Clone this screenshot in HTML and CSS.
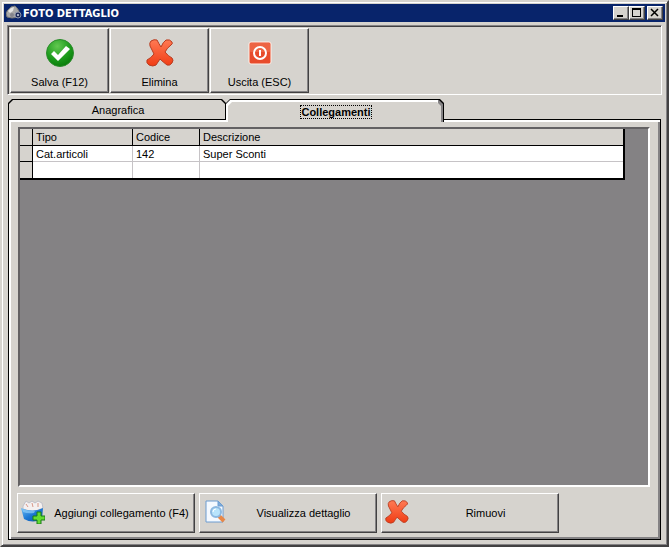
FILE: index.html
```html
<!DOCTYPE html>
<html lang="it">
<head>
    <meta charset="UTF-8">
    <meta name="viewport" content="width=device-width, initial-scale=1.0">
    <title>Foto dettaglio</title>
    <link rel="stylesheet" href="styles.css">
</head>
<body>
    <svg class="defs" aria-hidden="true">
        <defs>
            <linearGradient id="red" x1="0" y1="0" x2="0" y2="1">
                <stop offset="0" stop-color="#ff7a54"/>
                <stop offset="1" stop-color="#f03c14"/>
            </linearGradient>
            <radialGradient id="green" cx="0.4" cy="0.25" r="0.8">
                <stop offset="0" stop-color="#62c850"/>
                <stop offset="0.6" stop-color="#1c9a1c"/>
                <stop offset="1" stop-color="#087808"/>
            </radialGradient>
            <linearGradient id="blue" x1="0" y1="0" x2="1" y2="1">
                <stop offset="0" stop-color="#6cbcf4"/>
                <stop offset="0.5" stop-color="#1c78d4"/>
                <stop offset="1" stop-color="#0c50a4"/>
            </linearGradient>
            <symbol id="cross" viewBox="0 0 28 28">
                <path d="M5 2 Q8 0 11 1 Q13 5 15 8 Q17 3 20 1 Q24 0 26 3 Q27 5 25 6 Q21 9 19 13 Q22 17 26 19 Q28 21 26 24 Q24 27 21 26 Q17 23 14 20 Q12 23 10 26 Q7 28 3 26 Q0 24 1 21 Q5 19 8 15 Q6 11 4 7 Q3 4 5 2 Z" fill="url(#red)" stroke="#b83c20" stroke-width="1"/>
            </symbol>
        </defs>
    </svg>

    <div class="window">
        <header class="title-bar">
            <svg class="app-icon" viewBox="0 0 16 16" aria-hidden="true">
                <path d="M0 8 L2 5 L5 2 L9 1 L11 3 L13 6 L13 12 L6 13 L1 12 Z" fill="#a8a8a8" stroke="#787878"/>
                <path d="M2 6 L5 3 L8 2 L7 6 L4 8 Z" fill="#e4e4e4"/>
                <circle cx="6" cy="10" r="2" fill="#84848c"/>
                <circle cx="12" cy="10" r="3" fill="#202c58" stroke="#8c94ac"/>
                <circle cx="12" cy="10" r="1" fill="#d0d8e8"/>
            </svg>
            <h1>FOTO DETTAGLIO</h1>
            <div class="window-buttons">
                <button type="button" aria-label="Riduci">
                    <svg viewBox="0 0 11 10"><path d="M2 7h6v2H2z"/></svg>
                </button>
                <button type="button" aria-label="Ingrandisci">
                    <svg viewBox="0 0 11 10"><path fill-rule="evenodd" d="M1 0h9v9H1z M2 2v6h7V2z"/></svg>
                </button>
                <button type="button" class="close" aria-label="Chiudi">
                    <svg viewBox="0 0 11 10"><path d="M2 1L9 8M9 1L2 8" stroke="#000" stroke-width="1.500"/></svg>
                </button>
            </div>
        </header>

        <div class="toolbar">
            <button type="button" class="tool">
                <svg viewBox="0 0 28 28" aria-hidden="true">
                    <circle cx="14" cy="14" r="13.500" fill="url(#green)" stroke="#2c8c2c"/>
                    <path d="M5 15 L8 12 L12 16 L20 7 L24 10 L12 22 Z" fill="#fff"/>
                </svg>
                Salva (F12)
            </button>
            <button type="button" class="tool">
                <svg aria-hidden="true"><use href="#cross"/></svg>
                Elimina
            </button>
            <button type="button" class="tool">
                <svg viewBox="0 0 28 28" aria-hidden="true">
                    <rect x="3" y="3" width="22" height="22" rx="2" fill="#e84c2c" stroke="#fff0e8"/>
                    <rect x="4" y="4" width="20" height="9" rx="1" fill="#f07454" opacity="0.6"/>
                    <circle cx="14" cy="14" r="6" fill="none" stroke="#fff" stroke-width="2"/>
                    <path d="M14 11v6" stroke="#fff" stroke-width="2"/>
                </svg>
                Uscita (ESC)
            </button>
        </div>

        <div class="tabs" role="tablist">
            <button type="button" class="tab" role="tab" aria-selected="false"><span>Anagrafica</span></button>
            <button type="button" class="tab active" role="tab" aria-selected="true"><span>Collegamenti</span></button>
        </div>

        <main class="panel">
            <div class="grid">
                <table>
                    <thead>
                        <tr>
                            <th class="marker"></th>
                            <th class="tipo">Tipo</th>
                            <th class="codice">Codice</th>
                            <th>Descrizione</th>
                        </tr>
                    </thead>
                    <tbody>
                        <tr>
                            <th class="marker"></th>
                            <td>Cat.articoli</td>
                            <td>142</td>
                            <td>Super Sconti</td>
                        </tr>
                        <tr>
                            <th class="marker"></th>
                            <td></td>
                            <td></td>
                            <td></td>
                        </tr>
                    </tbody>
                </table>
            </div>

            <div class="actions">
                <button type="button" class="action">
                    <svg viewBox="0 0 24 24" aria-hidden="true">
                        <path d="M2 6 L5 1 L8 3 L11 1 L14 3 L17 1 L21 3 L22 8 L12 12 L2 9 Z" fill="#f4f0f0" stroke="#c0c0c8"/>
                        <path d="M5 4 L7 7 M11 3 L12 7 M17 3 L17 7" stroke="#d89888"/>
                        <path d="M0 8 Q12 13 22 8 L21 19 Q12 24 3 19 Z" fill="url(#blue)"/>
                        <path d="M1 9 Q7 11 14 11 L13 13 Q7 14 2 12 Z" fill="#8cccf8" opacity="0.7"/>
                        <path d="M16 12h4v4h4v4h-4v4h-4v-4h-4v-4h4z" fill="#64dc30" stroke="#187c18"/>
                    </svg>
                    <span>Aggiungi collegamento (F4)</span>
                </button>
                <button type="button" class="action">
                    <svg viewBox="0 0 24 24" aria-hidden="true">
                        <path d="M3 1 H15 L20 6 V22 H3 Z" fill="#f4f9ff" stroke="#6c9cd0"/>
                        <path d="M15 1 V6 H20 Z" fill="#7cacdc" stroke="#6c9cd0"/>
                        <path d="M16 16 L21 21" stroke="#e88848" stroke-width="4"/>
                        <circle cx="13" cy="12" r="5" fill="#b8e4fc" stroke="#8cb8e0" stroke-width="2"/>
                        <path d="M10 12 Q10 9 13 9" fill="none" stroke="#fff"/>
                    </svg>
                    <span>Visualizza dettaglio</span>
                </button>
                <button type="button" class="action">
                    <svg aria-hidden="true"><use href="#cross"/></svg>
                    <span>Rimuovi</span>
                </button>
            </div>
        </main>
    </div>
</body>
</html>
```
FILE: styles.css
```css
* {
    box-sizing: border-box;
    margin: 0;
    padding: 0;
}

body {
    background: #d6d3ce;
    color: #000;
    font-family: "Liberation Sans", Arial, sans-serif;
    font-size: 11px;
    line-height: 14px;
}

button {
    background: #d6d3ce;
    border: none;
    color: inherit;
    font: inherit;
}

.defs {
    position: absolute;
    width: 0;
    height: 0;
}

.window {
    display: flex;
    flex-direction: column;
    min-height: 100vh;
    padding: 2px;
    border: 2px solid;
    border-color: #d6d3ce #424142 #424142 #d6d3ce;
    box-shadow: inset 1px 1px #fff, inset -1px -1px #848284;
}

/* title bar */
.title-bar {
    display: flex;
    align-items: center;
    height: 18px;
    padding: 0 2px;
    background: #08246b;
    color: #fff;
}

.app-icon {
    width: 16px;
    height: 16px;
}

.title-bar h1 {
    flex: 1;
    padding: 1px 0 0 1px;
    font-family: "DejaVu Sans Condensed", "Open Sans", sans-serif;
    font-size: 11px;
    font-weight: bold;
}

.window-buttons {
    display: flex;
}

.window-buttons button {
    width: 16px;
    height: 14px;
    border: 1px solid;
    border-color: #fff #424142 #424142 #fff;
    box-shadow: inset -1px -1px #848284;
}

.window-buttons .close {
    margin-left: 2px;
}

.window-buttons svg {
    display: block;
    width: 11px;
    height: 10px;
    margin: 1px;
}

/* toolbar */
.toolbar {
    display: flex;
    gap: 1px;
    margin: 3px 3px 0;
    padding: 2px 1px 1px 2px;
    border: 1px solid;
    border-color: #848284 #fff #fff #848284;
    box-shadow: inset 1px 1px #424142;
}

.tool {
    display: flex;
    flex-direction: column;
    align-items: center;
    justify-content: space-between;
    width: 99px;
    height: 65px;
    padding: 10px 0 3px;
    border: 1px solid;
    border-color: #fff #424142 #424142 #fff;
    box-shadow: inset -1px -1px #848284;
}

.tool svg {
    width: 28px;
    height: 28px;
}

/* tabs */
.tabs {
    display: flex;
    margin: 4px 4px 0;
}

.tab {
    position: relative;
    z-index: 1;
    width: 218px;
    height: 20px;
    padding: 2px 0 0 2px;
    background: #000;
    clip-path: polygon(0 4px, 4px 0, calc(100% - 4px) 0, 100% 4px, 100% 100%, 0 100%);
}

.tab::before,
.tab.active::after {
    content: "";
    position: absolute;
    inset: 1px 1px 0;
    background: #d6d3ce;
    clip-path: polygon(0 4px, 4px 0, calc(100% - 4px) 0, 100% 4px, 100% 100%, 0 100%);
}

.tab span {
    position: relative;
    z-index: 1;
}

.tab.active {
    height: 23px;
    margin-bottom: -3px;
    font-weight: bold;
}

.tab.active::before {
    inset: 1px 1px 0 0;
    background: linear-gradient(to right, #fff 212px, #848284 212px);
}

.tab.active::after {
    inset: 3px 3px 0 2px;
}

.tab.active span {
    outline: 1px dotted #000;
}

/* panel */
.panel {
    display: flex;
    flex: 1;
    flex-direction: column;
    margin: 0 4px 3px;
    padding: 7px 10px 6px 8px;
    border: 1px solid #000;
    box-shadow: inset 2px 2px #fff, inset -2px -2px #848284;
}

.grid {
    flex: 1;
    margin-left: 1px;
    border: 2px solid;
    border-color: #636163 #fff #fff #636163;
    background: #848284;
}

table {
    width: calc(100% - 23px);
    border-right: 2px solid #000;
    border-bottom: 2px solid #000;
    border-spacing: 0;
    table-layout: fixed;
    background: #fff;
}

th,
td {
    height: 16px;
    padding: 0 3px;
    border-right: 1px solid #c6c3c6;
    border-bottom: 1px solid #c6c3c6;
    line-height: 14px;
    text-align: left;
    font-weight: normal;
}

thead th {
    height: 17px;
}

th {
    background: #d6d3ce;
    border-color: #000;
}

th:last-child,
td:last-child {
    border-right: none;
}

tbody tr:last-child > * {
    border-bottom: none;
}

.marker {
    width: 13px;
}

.tipo {
    width: 100px;
}

.codice {
    width: 67px;
}

/* bottom buttons */
.actions {
    display: flex;
    gap: 4px;
    margin-top: 6px;
}

.action {
    display: flex;
    align-items: center;
    gap: 4px;
    width: 178px;
    height: 40px;
    padding: 0 0 2px 3px;
    border: 1px solid;
    border-color: #fff #424142 #424142 #fff;
    box-shadow: inset -1px -1px #848284;
}

.action svg {
    width: 24px;
    height: 24px;
}

.action span {
    flex: 1;
    padding-top: 2px;
}
```
